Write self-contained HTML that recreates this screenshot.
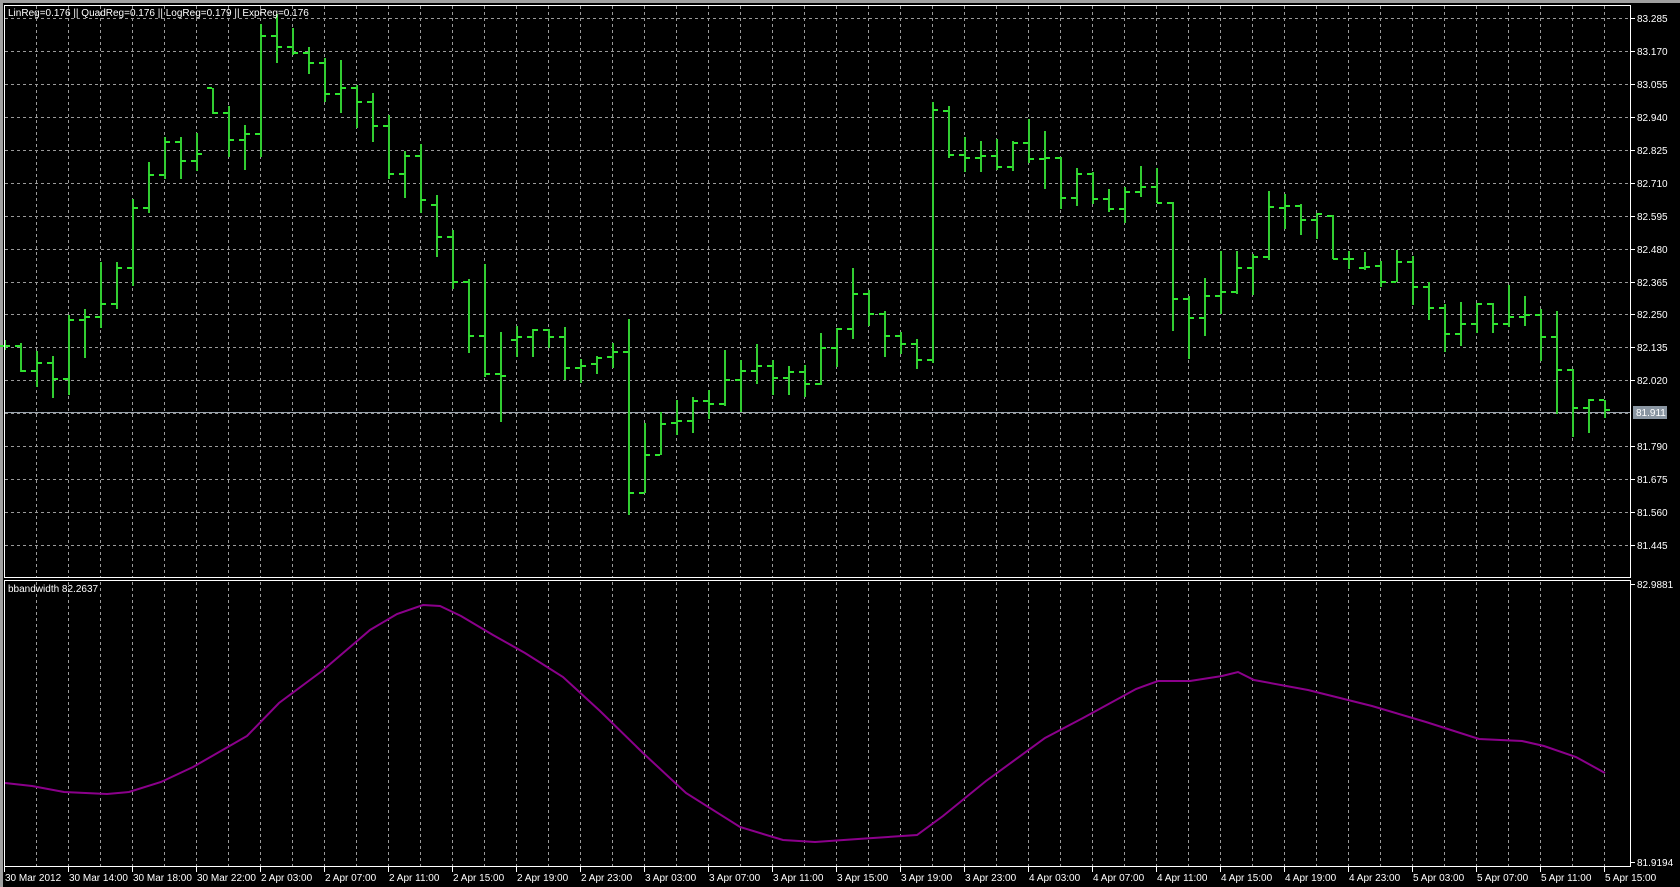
<!DOCTYPE html>
<html><head><meta charset="utf-8"><style>
html,body{margin:0;padding:0;background:#000;width:1680px;height:887px;overflow:hidden}
svg{display:block}
text{font-family:"Liberation Sans",sans-serif;font-size:10px;fill:#fff}
</style></head><body>
<svg width="1680" height="887" xmlns="http://www.w3.org/2000/svg">
<rect x="0" y="0" width="1680" height="887" fill="#000"/>
<rect x="0" y="0" width="1680" height="3" fill="#a0a0a0"/>
<rect x="0" y="0" width="3" height="887" fill="#a0a0a0"/>
<g stroke="#9a9a9a" stroke-width="1" stroke-dasharray="3,3" fill="none">
<path d="M5 18.5H1629M5 51.5H1629M5 84.5H1629M5 117.5H1629M5 150.5H1629M5 183.5H1629M5 216.5H1629M5 249.5H1629M5 282.5H1629M5 314.5H1629M5 347.5H1629M5 380.5H1629M5 413.5H1629M5 446.5H1629M5 479.5H1629M5 512.5H1629M5 545.5H1629"/>
<path d="M36.5 6V577M68.5 6V577M100.5 6V577M132.5 6V577M164.5 6V577M196.5 6V577M228.5 6V577M260.5 6V577M292.5 6V577M324.5 6V577M356.5 6V577M388.5 6V577M420.5 6V577M452.5 6V577M484.5 6V577M516.5 6V577M548.5 6V577M580.5 6V577M612.5 6V577M644.5 6V577M676.5 6V577M708.5 6V577M740.5 6V577M772.5 6V577M804.5 6V577M836.5 6V577M868.5 6V577M900.5 6V577M932.5 6V577M964.5 6V577M996.5 6V577M1028.5 6V577M1060.5 6V577M1092.5 6V577M1124.5 6V577M1156.5 6V577M1188.5 6V577M1220.5 6V577M1252.5 6V577M1284.5 6V577M1316.5 6V577M1348.5 6V577M1380.5 6V577M1412.5 6V577M1444.5 6V577M1476.5 6V577M1508.5 6V577M1540.5 6V577M1572.5 6V577M1604.5 6V577"/>
<path d="M36.5 582V866M68.5 582V866M100.5 582V866M132.5 582V866M164.5 582V866M196.5 582V866M228.5 582V866M260.5 582V866M292.5 582V866M324.5 582V866M356.5 582V866M388.5 582V866M420.5 582V866M452.5 582V866M484.5 582V866M516.5 582V866M548.5 582V866M580.5 582V866M612.5 582V866M644.5 582V866M676.5 582V866M708.5 582V866M740.5 582V866M772.5 582V866M804.5 582V866M836.5 582V866M868.5 582V866M900.5 582V866M932.5 582V866M964.5 582V866M996.5 582V866M1028.5 582V866M1060.5 582V866M1092.5 582V866M1124.5 582V866M1156.5 582V866M1188.5 582V866M1220.5 582V866M1252.5 582V866M1284.5 582V866M1316.5 582V866M1348.5 582V866M1380.5 582V866M1412.5 582V866M1444.5 582V866M1476.5 582V866M1508.5 582V866M1540.5 582V866M1572.5 582V866M1604.5 582V866"/>
</g>
<line x1="4" y1="412.5" x2="1630" y2="412.5" stroke="#9aa4ae" stroke-width="1"/>
<path fill="none" stroke="#32cd32" stroke-width="2" d="M5 340V350M21 343V372M37 351V387M53 356V398M69 315V395M85 309V358M101 262V328M117 262V309M133 199V286M149 162V213M165 137V179M181 137V179M197 133V171M213 88V114M229 106V157M245 125V170M261 24V157M277 14V63M293 28V55M309 47V74M325 58V102M341 60V113M357 85V128M373 93V142M389 115V179M405 151V198M421 144V213M437 195V257M453 230V289M469 279V353M485 264V377M501 332V422M517 326V357M533 329V357M549 329V348M565 327V380M581 359V383M597 356V374M613 343V368M629 319V515M645 423V493M661 412V455M677 400V435M693 397V433M709 390V419M725 350V406M741 360V412M757 344V384M773 360V395M789 366V395M805 365V397M821 333V385M837 328V367M853 268V339M869 290V326M885 311V357M901 332V354M917 339V369M933 102V363M949 106V158M965 137V172M981 141V172M997 139V170M1013 141V171M1029 119V163M1045 131V189M1061 157V209M1077 168V206M1093 172V204M1109 189V212M1125 187V223M1141 166V197M1157 168V203M1173 202V331M1189 296V359M1205 278V336M1221 251V314M1237 251V294M1253 254V295M1269 191V260M1285 194V229M1301 204V235M1317 213V239M1333 215V259M1349 251V269M1365 252V270M1381 261V287M1397 250V282M1413 256V305M1429 282V320M1445 304V352M1461 302V346M1477 303V333M1493 303V333M1509 285V327M1525 296V326M1541 309V361M1557 311V414M1573 369V437M1589 399V433M1605 400V418"/>
<path fill="none" stroke="#2fe62f" stroke-width="2" d="M0 346h4M5 346h5M15 346h5M21 371h5M31 371h5M37 363h5M47 363h5M53 379h5M63 379h5M69 320h5M79 320h5M85 317h5M95 317h5M101 304h5M111 304h5M117 268h5M127 268h5M133 208h5M143 208h5M149 175h5M159 175h5M165 142h5M175 142h5M181 161h5M191 161h5M197 154h5M207 88h5M213 113h5M223 113h5M229 140h5M239 140h5M245 134h5M255 134h5M261 36h5M271 36h5M277 47h5M287 47h5M293 53h5M303 53h5M309 63h5M319 63h5M325 94h5M335 94h5M341 88h5M351 88h5M357 102h5M367 102h5M373 126h5M383 126h5M389 174h5M399 174h5M405 156h5M415 156h5M421 200h5M431 205h5M437 237h5M447 237h5M453 282h5M463 282h5M469 336h5M479 336h5M485 374h5M495 374h5M501 376h5M511 340h5M517 337h5M527 337h5M533 330h5M543 330h5M549 337h5M559 337h5M565 368h5M575 368h5M581 366h5M591 364h5M597 358h5M607 357h5M613 352h5M623 352h5M629 493h5M639 493h5M645 455h5M655 455h5M661 424h5M671 423h5M677 421h5M687 421h5M693 401h5M703 401h5M709 404h5M719 404h5M725 380h5M735 380h5M741 371h5M751 371h5M757 366h5M767 366h5M773 378h5M783 378h5M789 372h5M799 372h5M805 384h5M815 384h5M821 348h5M831 348h5M837 329h5M847 329h5M853 294h5M863 294h5M869 314h5M879 314h5M885 336h5M895 336h5M901 344h5M911 344h5M917 360h5M927 360h5M933 110h5M943 111h5M949 155h5M959 155h5M965 158h5M975 158h5M981 156h5M991 156h5M997 167h5M1007 167h5M1013 143h5M1023 143h5M1029 159h5M1039 159h5M1045 158h5M1055 158h5M1061 198h5M1071 198h5M1077 174h5M1087 174h5M1093 199h5M1103 199h5M1109 209h5M1119 209h5M1125 192h5M1135 192h5M1141 187h5M1151 187h5M1157 203h5M1167 203h5M1173 299h5M1183 299h5M1189 318h5M1199 318h5M1205 296h5M1215 296h5M1221 292h5M1231 292h5M1237 268h5M1247 268h5M1253 257h5M1263 257h5M1269 207h5M1279 208h5M1285 206h5M1295 206h5M1301 220h5M1311 220h5M1317 214h5M1327 216h5M1333 259h5M1343 259h5M1349 259h5M1359 268h5M1365 267h5M1375 266h5M1381 282h5M1391 282h5M1397 262h5M1407 262h5M1413 287h5M1423 287h5M1429 308h5M1439 308h5M1445 334h5M1455 334h5M1461 324h5M1471 324h5M1477 304h5M1487 304h5M1493 324h5M1503 324h5M1509 317h5M1519 317h5M1525 315h5M1535 315h5M1541 337h5M1551 337h5M1557 370h5M1567 370h5M1573 408h5M1583 408h5M1589 400h5M1599 400h5M1605 410h5"/>
<polyline fill="none" stroke="#8b008b" stroke-width="2" points="5,783 32,786 64,792 107,794 129,792 161,782 193,767 247,736 279,703 322,671 370,630 397,614 423,605 440,606 461,616 493,635 525,653 563,677 600,711 643,753 686,793 740,827 783,840 815,842 858,839 917,835 943,816 986,781 1045,738 1083,718 1136,689 1158,681 1190,681 1222,676 1238,672 1254,680 1308,690 1372,706 1426,722 1479,739 1522,741 1544,746 1576,757 1605,773"/>
<g stroke="#fff" stroke-width="1" fill="none">
<path d="M4.5 5.5H1630.5V577.5H4.5Z"/>
<path d="M4.5 580.5H1630.5V866.5H4.5Z"/>
<path d="M1631 18.5h4M1631 51.5h4M1631 84.5h4M1631 117.5h4M1631 150.5h4M1631 183.5h4M1631 216.5h4M1631 249.5h4M1631 282.5h4M1631 314.5h4M1631 347.5h4M1631 380.5h4M1631 446.5h4M1631 479.5h4M1631 512.5h4M1631 545.5h4M1631 584.5h4M1631 862.5h4"/>
<path d="M4.5 867V872M68.5 867V872M132.5 867V872M196.5 867V872M260.5 867V872M324.5 867V872M388.5 867V872M452.5 867V872M516.5 867V872M580.5 867V872M644.5 867V872M708.5 867V872M772.5 867V872M836.5 867V872M900.5 867V872M964.5 867V872M1028.5 867V872M1092.5 867V872M1156.5 867V872M1220.5 867V872M1284.5 867V872M1348.5 867V872M1412.5 867V872M1476.5 867V872M1540.5 867V872M1604.5 867V872"/>
</g>
<text x="8" y="16">LinReg=0.176 || QuadReg=0.176 || LogReg=0.179 || ExpReg=0.176</text>
<text x="8" y="592">bbandwidth 82.2637</text>
<g>
<text x="1637" y="22">83.285</text>
<text x="1637" y="55">83.170</text>
<text x="1637" y="88">83.055</text>
<text x="1637" y="121">82.940</text>
<text x="1637" y="154">82.825</text>
<text x="1637" y="187">82.710</text>
<text x="1637" y="220">82.595</text>
<text x="1637" y="253">82.480</text>
<text x="1637" y="286">82.365</text>
<text x="1637" y="318">82.250</text>
<text x="1637" y="351">82.135</text>
<text x="1637" y="384">82.020</text>
<rect x="1633" y="406" width="34" height="13" fill="#8a96a2"/>
<text x="1636" y="416">81.911</text>
<text x="1637" y="450">81.790</text>
<text x="1637" y="483">81.675</text>
<text x="1637" y="516">81.560</text>
<text x="1637" y="549">81.445</text>
<text x="1637" y="588">82.9881</text>
<text x="1637" y="866">81.9194</text>
</g>
<g>
<text x="5" y="881">30 Mar 2012</text>
<text x="69" y="881">30 Mar 14:00</text>
<text x="133" y="881">30 Mar 18:00</text>
<text x="197" y="881">30 Mar 22:00</text>
<text x="261" y="881">2 Apr 03:00</text>
<text x="325" y="881">2 Apr 07:00</text>
<text x="389" y="881">2 Apr 11:00</text>
<text x="453" y="881">2 Apr 15:00</text>
<text x="517" y="881">2 Apr 19:00</text>
<text x="581" y="881">2 Apr 23:00</text>
<text x="645" y="881">3 Apr 03:00</text>
<text x="709" y="881">3 Apr 07:00</text>
<text x="773" y="881">3 Apr 11:00</text>
<text x="837" y="881">3 Apr 15:00</text>
<text x="901" y="881">3 Apr 19:00</text>
<text x="965" y="881">3 Apr 23:00</text>
<text x="1029" y="881">4 Apr 03:00</text>
<text x="1093" y="881">4 Apr 07:00</text>
<text x="1157" y="881">4 Apr 11:00</text>
<text x="1221" y="881">4 Apr 15:00</text>
<text x="1285" y="881">4 Apr 19:00</text>
<text x="1349" y="881">4 Apr 23:00</text>
<text x="1413" y="881">5 Apr 03:00</text>
<text x="1477" y="881">5 Apr 07:00</text>
<text x="1541" y="881">5 Apr 11:00</text>
<text x="1605" y="881">5 Apr 15:00</text>
</g>
</svg>
</body></html>
